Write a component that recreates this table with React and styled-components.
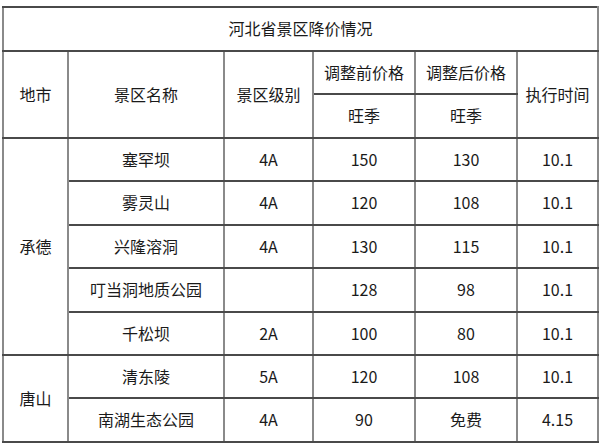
import React from 'react';
import styled, { createGlobalStyle } from 'styled-components';

const GlobalStyle = createGlobalStyle`
  body {
    margin: 0;
    background: #ffffff;
    font-family: 'Noto Sans CJK SC', 'Noto Sans', sans-serif;
    color: #1a1a1a;
  }
`;

const Page = styled.div`
  padding: 6px 0 0 2px;
`;

const Table = styled.table`
  width: 595px;
  border-collapse: collapse;
  table-layout: fixed;
  font-size: 16px;
`;

const Row = styled.tr`
  height: ${(p) => p.h || 43}px;
`;

const Cell = styled.td`
  border-left: 2px solid #8a8a8a;
  border-right: 2px solid #8a8a8a;
  border-top: 2px solid #4a4a4a;
  border-bottom: 2px solid #4a4a4a;
  text-align: center;
  vertical-align: middle;
  padding: 0;
  line-height: 1.2;
`;

const cols = [65, 156, 89, 102, 102, 81];

const rows = [
  ['塞罕坝', '4A', '150', '130', '10.1'],
  ['雾灵山', '4A', '120', '108', '10.1'],
  ['兴隆溶洞', '4A', '130', '115', '10.1'],
  ['叮当洞地质公园', '', '128', '98', '10.1'],
  ['千松坝', '2A', '100', '80', '10.1'],
];

const tangshan = [
  ['清东陵', '5A', '120', '108', '10.1'],
  ['南湖生态公园', '4A', '90', '免费', '4.15'],
];

const BodyRow = ({ city, span, data, h }) => (
  <Row h={h}>
    {city && <Cell rowSpan={span}>{city}</Cell>}
    {data.map((v, i) => (
      <Cell key={i}>{v}</Cell>
    ))}
  </Row>
);

const App = () => {
  return (
    <Page>
      <GlobalStyle />
      <Table>
        <colgroup>
          {cols.map((w, i) => (
            <col key={i} style={{ width: w }} />
          ))}
        </colgroup>
        <tbody>
          <Row h={44}>
            <Cell colSpan={6}>河北省景区降价情况</Cell>
          </Row>
          <Row h={43}>
            <Cell rowSpan={2}>地市</Cell>
            <Cell rowSpan={2}>景区名称</Cell>
            <Cell rowSpan={2}>景区级别</Cell>
            <Cell>调整前价格</Cell>
            <Cell>调整后价格</Cell>
            <Cell rowSpan={2}>执行时间</Cell>
          </Row>
          <Row h={44}>
            <Cell>旺季</Cell>
            <Cell>旺季</Cell>
          </Row>
          {rows.map((r, i) => (
            <BodyRow key={r[0]} city={i === 0 ? '承德' : null} span={5} data={r} h={43.4} />
          ))}
          {tangshan.map((r, i) => (
            <BodyRow key={r[0]} city={i === 0 ? '唐山' : null} span={2} data={r} h={43.4} />
          ))}
        </tbody>
      </Table>
    </Page>
  );
};

export default App;
